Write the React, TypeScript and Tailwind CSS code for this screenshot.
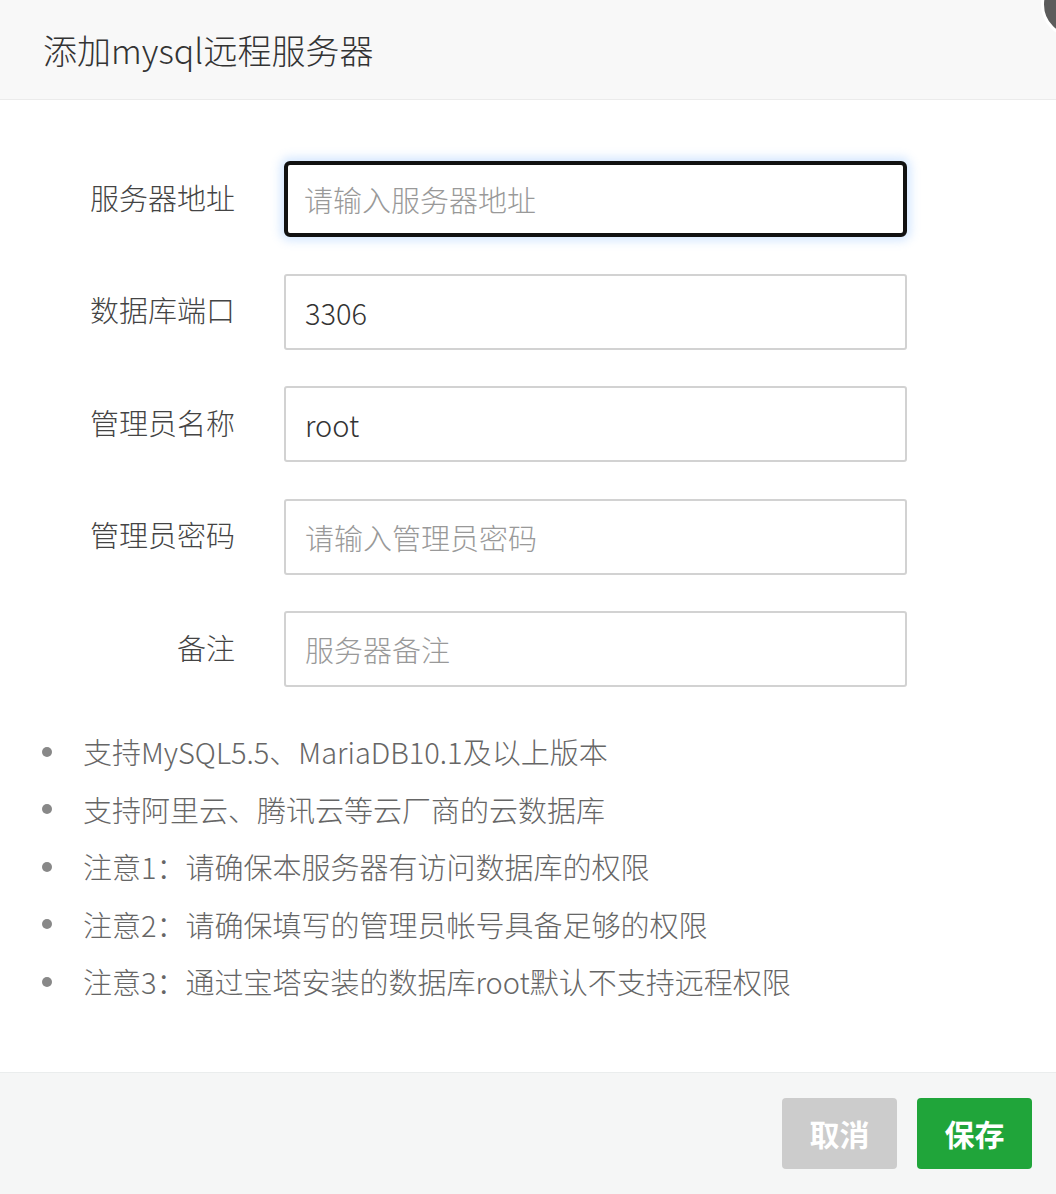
const font = {
  fontFamily: '"Noto Sans CJK SC", "Noto Sans", sans-serif',
};

const fields = [
  { label: "服务器地址", placeholder: "请输入服务器地址", value: "", focused: true },
  { label: "数据库端口", placeholder: "请输入数据库端口", value: "3306" },
  { label: "管理员名称", placeholder: "请输入管理员名称", value: "root" },
  { label: "管理员密码", placeholder: "请输入管理员密码", value: "" },
  { label: "备注", placeholder: "服务器备注", value: "" },
];

const tips = [
  "支持MySQL5.5、MariaDB10.1及以上版本",
  "支持阿里云、腾讯云等云厂商的云数据库",
  "注意1：请确保本服务器有访问数据库的权限",
  "注意2：请确保填写的管理员帐号具备足够的权限",
  "注意3：通过宝塔安装的数据库root默认不支持远程权限",
];

export default function App() {
  return (
    <div className="relative h-[1194px] w-[1056px] overflow-hidden bg-white" style={font}>
      <div className="absolute right-[-52px] top-[-29px] h-[67px] w-[67px] rounded-full border-[3px] border-white bg-[#5c5c5c]" />

      <header className="flex h-[100px] items-center border-b border-[#ebebeb] bg-[#f8f8f8] pl-[43px]">
        <h1 className="text-[34px] font-light leading-none text-[#333]">添加mysql远程服务器</h1>
      </header>

      <form className="flex flex-col gap-[36.5px] pt-[61px]">
        {fields.map((f) => (
          <div className="flex items-center" key={f.label}>
            <label className="w-[235px] -translate-y-[2px] text-right text-[29px] font-light leading-none text-[#444]">
              {f.label}
            </label>
            <input
              className={`ml-[49px] h-[76px] w-[623px] bg-white text-[29px] font-light text-[#333] outline-none placeholder:text-[#999] ${
                f.focused
                  ? "rounded-[6px] border-[4px] border-[#111] px-[16px] shadow-[0_0_10px_4px_rgba(120,180,255,0.3)]"
                  : "rounded-[3px] border-2 border-[#d2d2d2] px-[19px]"
              }`}
              defaultValue={f.value}
              placeholder={f.placeholder}
              style={font}
              type="text"
            />
          </div>
        ))}
      </form>

      <ul className="mt-[36px] pb-[60px] pl-[42px]">
        {tips.map((t) => (
          <li className="flex items-center text-[29px] font-light leading-[57.5px] text-[#666]" key={t}>
            <span className="mr-[31px] h-[10px] w-[10px] rounded-full bg-[#888]" />
            {t}
          </li>
        ))}
      </ul>

      <footer className="absolute bottom-0 left-0 right-0 flex h-[122px] justify-end gap-[20px] border-t border-[#eaeded] bg-[#f5f6f6] pr-[24px] pt-[25px]">
        <button className="h-[71px] w-[115px] rounded-[4px] bg-[#cccccc] text-[30px] font-bold text-white" type="button">
          取消
        </button>
        <button className="h-[71px] w-[115px] rounded-[4px] bg-[#20a53a] text-[30px] font-bold text-white" type="button">
          保存
        </button>
      </footer>
    </div>
  );
}
